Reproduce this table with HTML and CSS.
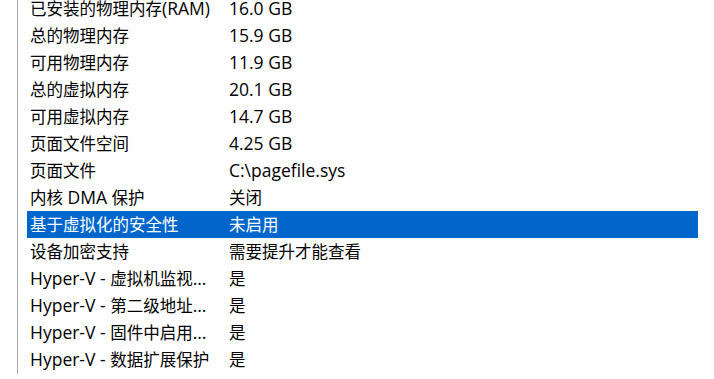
FILE: index.html
```html
<!DOCTYPE html>
<html lang="zh-CN">
<head>
<meta charset="utf-8">
<title>系统摘要</title>
<link rel="stylesheet" href="styles.css">
</head>
<body>
<div class="pane">
  <ul class="list">
    <li class="row"><span class="name">已安装的物理内存<span class="lat">(RAM)</span></span><span class="value lat">16.0 GB</span></li>
    <li class="row"><span class="name">总的物理内存</span><span class="value lat">15.9 GB</span></li>
    <li class="row"><span class="name">可用物理内存</span><span class="value lat">11.9 GB</span></li>
    <li class="row"><span class="name">总的虚拟内存</span><span class="value lat">20.1 GB</span></li>
    <li class="row"><span class="name">可用虚拟内存</span><span class="value lat">14.7 GB</span></li>
    <li class="row"><span class="name">页面文件空间</span><span class="value lat">4.25 GB</span></li>
    <li class="row"><span class="name">页面文件</span><span class="value lat">C:\pagefile.sys</span></li>
    <li class="row"><span class="name">内核<span class="lat"> DMA </span>保护</span><span class="value">关闭</span></li>
    <li class="row selected"><span class="name">基于虚拟化的安全性</span><span class="value">未启用</span></li>
    <li class="row"><span class="name">设备加密支持</span><span class="value">需要提升才能查看</span></li>
    <li class="row"><span class="name"><span class="lat">Hyper-V - </span>虚拟机监视<span class="lat">...</span></span><span class="value">是</span></li>
    <li class="row"><span class="name"><span class="lat">Hyper-V - </span>第二级地址<span class="lat">...</span></span><span class="value">是</span></li>
    <li class="row"><span class="name"><span class="lat">Hyper-V - </span>固件中启用<span class="lat">...</span></span><span class="value">是</span></li>
    <li class="row"><span class="name"><span class="lat">Hyper-V - </span>数据扩展保护</span><span class="value">是</span></li>
  </ul>
</div>
</body>
</html>
```
FILE: styles.css
```css
html, body {
  margin: 0;
  padding: 0;
  background: #ffffff;
  height: 100%;
  overflow: hidden;
}

body {
  font-family: "Open Sans", "Noto Sans CJK SC", sans-serif;
  font-size: 16.5px;
  color: #000000;
}

.pane {
  margin-left: 17px;
  height: 100%;
  border-left: 1px solid #a8a8a8;
  padding-left: 9px;
}

/* list is scrolled a few pixels, so the first row sits partly above the pane */
.list {
  list-style: none;
  margin: -5px 0 0 0;
  padding: 0;
  width: 671px;
}

.row {
  display: flex;
  align-items: center;
  height: 27px;
  padding-left: 3px;
  white-space: nowrap;
  line-height: 27px;
}

.name {
  width: 199px;
  flex: none;
}

.value {
  flex: 1;
}

/* latin runs are set a little larger than the CJK glyphs */
.lat {
  font-size: 17.5px;
}

.selected {
  background: #0066cc;
  color: #ffffff;
}
```
